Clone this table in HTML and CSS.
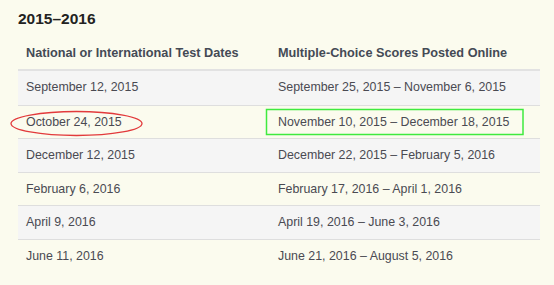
FILE: index.html
```html
<!DOCTYPE html>
<html>
<head>
<meta charset="utf-8">
<link rel="stylesheet" href="styles.css">
</head>
<body>
<div class="wrap">
  <h2 class="title">2015–2016</h2>
  <table class="dates">
    <thead>
      <tr><th class="c1">National or International Test Dates</th><th>Multiple-Choice Scores Posted Online</th></tr>
    </thead>
    <tbody>
      <tr class="alt"><td>September 12, 2015</td><td>September 25, 2015 – November 6, 2015</td></tr>
      <tr><td>October 24, 2015</td><td>November 10, 2015 – December 18, 2015</td></tr>
      <tr class="alt"><td>December 12, 2015</td><td>December 22, 2015 – February 5, 2016</td></tr>
      <tr><td>February 6, 2016</td><td>February 17, 2016 – April 1, 2016</td></tr>
      <tr class="alt"><td>April 9, 2016</td><td>April 19, 2016 – June 3, 2016</td></tr>
      <tr><td>June 11, 2016</td><td>June 21, 2016 – August 5, 2016</td></tr>
    </tbody>
  </table>
  <svg class="marks" width="554" height="285" viewBox="0 0 554 285">
    <ellipse cx="76.5" cy="123.5" rx="65.5" ry="12" fill="none" stroke="#e23a3c" stroke-width="1.3"/>
    <rect x="266.5" y="109.5" width="256.5" height="25" fill="none" stroke="#3fea3f" stroke-width="1.5"/>
  </svg>
</div>
</body>
</html>
```
FILE: styles.css
```css
html, body {
  margin: 0;
  background: #fbfbee;
}
.wrap {
  position: relative;
  width: 554px;
  height: 285px;
  padding: 8px 14px 0 18px;
  box-sizing: border-box;
  font-family: "Liberation Sans", Arial, sans-serif;
}
.title {
  margin: 0;
  font-size: 15.5px;
  line-height: 22px;
  font-weight: bold;
  color: #222;
}
.dates {
  margin-top: 8px;
  width: 522px;
  border-collapse: separate;
  border-spacing: 0;
  font-size: 12.4px;
  color: #4a4a52;
}
.dates th {
  text-align: left;
  font-size: 12.7px;
  font-weight: bold;
  color: #444a55;
  line-height: 31px;
  padding: 0 8px;
  border-bottom: 2px solid #e2e2e2;
}
.dates th.c1 {
  width: 236px;
}
.dates td {
  line-height: 32.5px;
  padding: 0 8px;
  border-top: 1px solid #dedede;
  white-space: nowrap;
}
.dates tbody tr:first-child td {
  border-top: none;
  line-height: 33.5px;
}
.dates tr.alt td {
  background: #f5f5f5;
}
.marks {
  position: absolute;
  left: 0;
  top: 0;
  pointer-events: none;
}
```
